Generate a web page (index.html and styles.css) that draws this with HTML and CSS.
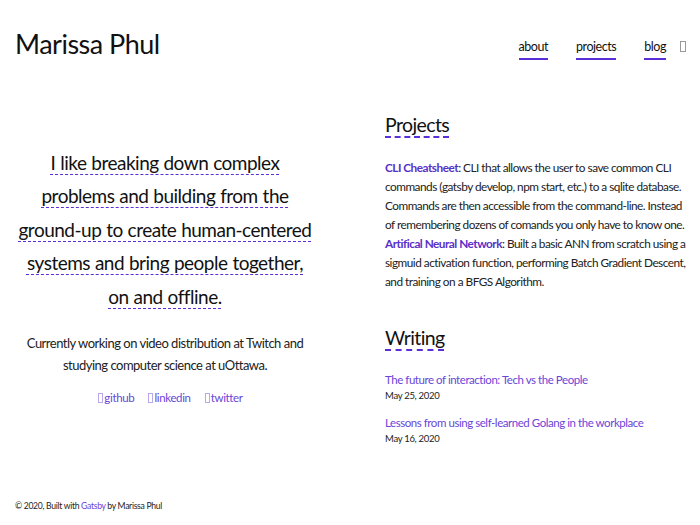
FILE: index.html
```html
<!DOCTYPE html>
<html lang="en">
<head>
<meta charset="utf-8">
<title>Marissa Phul</title>
<link rel="stylesheet" href="styles.css">
</head>
<body>
<header class="header">
  <h1 class="site-title">Marissa Phul</h1>
  <nav class="nav">
    <a class="nav-link" href="#">about</a>
    <a class="nav-link" href="#">projects</a>
    <a class="nav-link" href="#">blog</a>
    <span class="tofu tofu-nav"></span>
  </nav>
</header>
<main class="main">
  <section class="intro">
    <p class="hero"><span class="dashed">I like breaking down complex problems and building from the ground-up to create human-centered systems and bring people together, on and offline.</span></p>
    <p class="current">Currently working on video distribution at Twitch and studying computer science at uOttawa.</p>
    <div class="socials">
      <a class="social" href="#"><span class="tofu"></span>github</a>
      <a class="social" href="#"><span class="tofu"></span>linkedin</a>
      <a class="social" href="#"><span class="tofu"></span>twitter</a>
    </div>
  </section>
  <section class="side">
    <h2 class="section-title"><span class="dashed-title">Projects</span></h2>
    <p class="projects"><strong class="proj-name">CLI Cheatsheet</strong>: CLI that allows the user to save common CLI<br>commands (gatsby develop, npm start, etc.) to a sqlite database.<br>Commands are then accessible from the command-line. Instead<br>of remembering dozens of comands you only have to know one.<br><strong class="proj-name">Artifical Neural Network</strong>: Built a basic ANN from scratch using a<br>sigmuid activation function, performing Batch Gradient Descent,<br>and training on a BFGS Algorithm.</p>
    <h2 class="section-title writing-title"><span class="dashed-title">Writing</span></h2>
    <div class="post">
      <a class="post-link" href="#">The future of interaction: Tech vs the People</a>
      <div class="post-date">May 25, 2020</div>
    </div>
    <div class="post">
      <a class="post-link" href="#">Lessons from using self-learned Golang in the workplace</a>
      <div class="post-date">May 16, 2020</div>
    </div>
  </section>
</main>
<footer class="footer">© 2020, Built with <a class="footer-link" href="#">Gatsby</a> by Marissa Phul</footer>
</body>
</html>
```

FILE: styles.css
```css
* { box-sizing: border-box; }
html, body { margin: 0; padding: 0; }
body {
  width: 700px;
  height: 525px;
  background: #fff;
  color: #111;
  font-family: "Lato", sans-serif;
  display: flex;
  flex-direction: column;
}
a { text-decoration: none; }

.header {
  display: flex;
  justify-content: space-between;
  align-items: flex-start;
  padding: 26px 13px 0 15px;
  height: 90px;
  flex: none;
}
.site-title {
  margin: 0;
  font-weight: 400;
  font-size: 27px;
  line-height: 36px;
  letter-spacing: -0.5px;
}
.nav {
  display: flex;
  align-items: flex-start;
  gap: 28px;
  padding-top: 12px;
}
.nav-link {
  color: #111;
  font-size: 12.5px;
  line-height: 18px;
  letter-spacing: -0.45px;
  padding-bottom: 2px;
  border-bottom: 2px solid #5b2fd8;
}
.tofu {
  display: inline-block;
  width: 5px;
  height: 10px;
  border: 1px solid #b8a8e8;
  margin-right: 1px;
  vertical-align: -1px;
}
.tofu-nav {
  width: 6px;
  height: 11px;
  border-color: #999;
  margin-left: -14px;
  margin-top: 3px;
}

.main {
  display: flex;
  gap: 70px;
  padding: 0 9px 41px 15px;
  align-items: center;
  flex: 1;
}
.intro {
  width: 300px;
  flex: none;
  text-align: center;
}
.hero {
  margin: 0;
  font-size: 19px;
  line-height: 33.5px;
  letter-spacing: -0.5px;
  word-spacing: 0.5px;
  color: #111;
}
.dashed {
  text-decoration: underline dashed #5b2fd8;
  text-decoration-thickness: 1px;
  text-underline-offset: 4px;
}
.current {
  margin: 19px 0 0;
  font-size: 13px;
  line-height: 22px;
  letter-spacing: -0.5px;
  color: #222;
}
.socials {
  margin-top: 15px;
  padding-left: 11px;
  display: flex;
  justify-content: center;
  gap: 14px;
}
.social {
  color: #6a45d8;
  font-size: 11.5px;
  letter-spacing: -0.35px;
}
.side {
  width: 306px;
  flex: none;
  padding-top: 18px;
}
.section-title {
  margin: 0 0 20px;
  font-weight: 400;
  font-size: 19.5px;
  line-height: 26px;
  letter-spacing: -0.6px;
  color: #111;
}
.dashed-title {
  text-decoration: underline dashed #5b2fd8;
  text-decoration-thickness: 2px;
  text-underline-offset: 5px;
}
.writing-title { margin-top: 34px; margin-bottom: 20px; }
.projects {
  margin: 0;
  font-size: 11.8px;
  line-height: 19px;
  letter-spacing: -0.5px;
  white-space: nowrap;
  color: #222;
}
.proj-name { color: #5a2fc8; font-weight: 700; }
.post { margin-bottom: 10px; }
.post-link {
  display: block;
  color: #6a45d8;
  font-size: 11.5px;
  line-height: 17px;
  letter-spacing: -0.45px;
}
.post-date {
  font-size: 9.5px;
  line-height: 16px;
  letter-spacing: -0.3px;
  color: #222;
}
.footer {
  flex: none;
  padding: 0 15px 14px;
  font-size: 8.6px;
  letter-spacing: -0.3px;
  color: #222;
}
.footer-link { color: #6a45d8; }
```
